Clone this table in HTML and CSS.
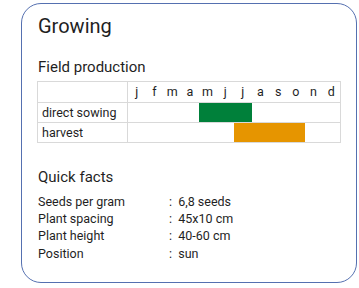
FILE: index.html
```html
<!DOCTYPE html>
<html>
<head>
<meta charset="utf-8">
<link rel="stylesheet" href="styles.css">
</head>
<body>
<div class="card">
  <h1 class="title">Growing</h1>
  <h2 class="section">Field production</h2>
  <div class="cal">
    <div class="cal-row">
      <div class="cal-label"></div>
      <div class="cal-months">
        <span>j</span><span>f</span><span>m</span><span>a</span><span>m</span><span>j</span><span>j</span><span>a</span><span>s</span><span>o</span><span>n</span><span>d</span>
      </div>
    </div>
    <div class="cal-row">
      <div class="cal-label">direct sowing</div>
      <div class="cal-months">
        <div class="bar sow" style="grid-column: 5 / 8"></div>
      </div>
    </div>
    <div class="cal-row">
      <div class="cal-label">harvest</div>
      <div class="cal-months">
        <div class="bar harvest" style="grid-column: 7 / 11"></div>
      </div>
    </div>
  </div>
  <h2 class="section facts-title">Quick facts</h2>
  <dl class="facts">
    <div class="fact"><dt>Seeds per gram</dt><dd>6,8 seeds</dd></div>
    <div class="fact"><dt>Plant spacing</dt><dd>45x10 cm</dd></div>
    <div class="fact"><dt>Plant height</dt><dd>40-60 cm</dd></div>
    <div class="fact"><dt>Position</dt><dd>sun</dd></div>
  </dl>
</div>
</body>
</html>
```
FILE: styles.css
```css
* { box-sizing: border-box; }
body {
  margin: 0;
  padding: 3px 0 0 21px;
  font-family: Roboto, "Liberation Sans", sans-serif;
  color: #1f1f1f;
  background: #fff;
}
.card {
  width: 336px;
  height: 280px;
  border: 1px solid #5570b0;
  border-radius: 20px;
  padding: 10px 15px 0 15px;
}
.title {
  margin: 0;
  font-size: 20px;
  font-weight: 400;
  line-height: 24px;
  padding-left: 1px;
}
.section {
  margin: 0;
  font-size: 15px;
  font-weight: 400;
  line-height: 18px;
  padding-left: 1px;
}
.title + .section { margin-top: 20px; }
.cal {
  margin-top: 5px;
  width: 304px;
  border: 1px solid #d9d9d9;
  font-size: 12.5px;
}
.cal-row {
  display: grid;
  grid-template-columns: 90px 1fr;
  height: 20px;
}
.cal-row + .cal-row { border-top: 1px solid #d9d9d9; }
.cal-label {
  border-right: 1px solid #d9d9d9;
  padding-left: 4px;
  line-height: 19px;
}
.cal-months {
  display: grid;
  grid-template-columns: repeat(12, 1fr);
  grid-template-rows: 1fr;
}
.cal-months span {
  text-align: center;
  line-height: 19px;
}
.bar { grid-row: 1; }
.sow { background: #00803a; }
.harvest { background: #e69500; }
.facts-title { margin-top: 25px; }
.facts {
  margin: 7px 0 0 0;
  font-size: 12.5px;
  line-height: 17.2px;
  padding-left: 1px;
}
.fact { display: flex; }
.fact dt { width: 131px; }
.fact dd { margin: 0; }
.fact dd::before { content: ":\00a0\00a0"; }
```
